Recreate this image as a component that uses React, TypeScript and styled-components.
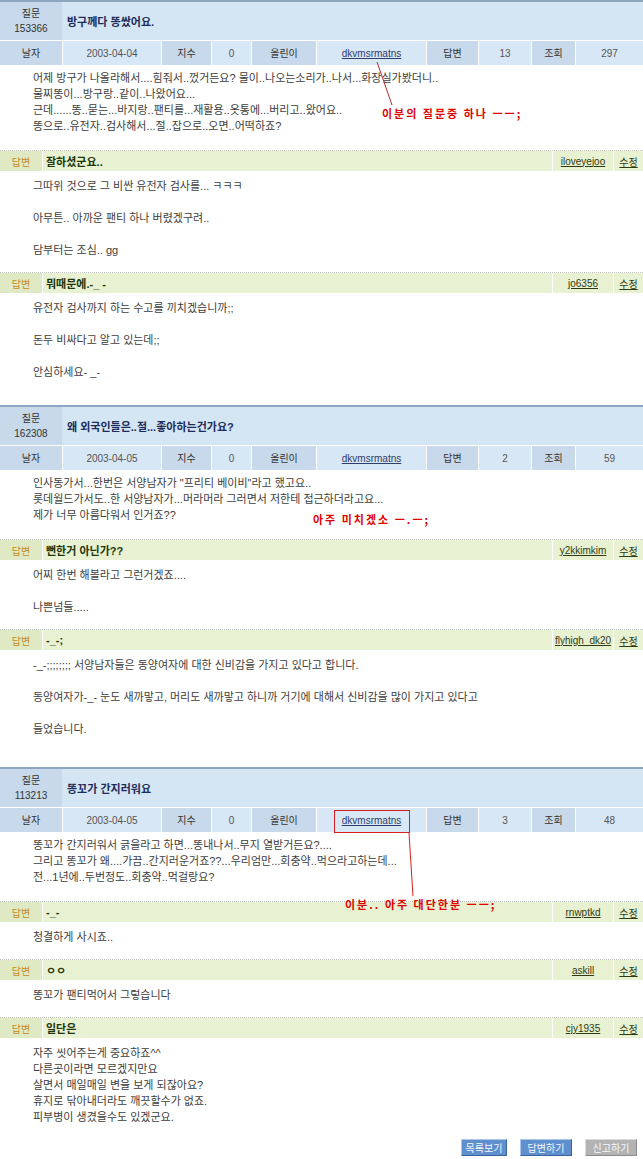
import React from 'react';
import styled, { createGlobalStyle } from 'styled-components';

const GlobalStyle = createGlobalStyle`
  html, body {
    margin: 0;
    padding: 0;
    background: #ffffff;
  }
  body {
    font-family: "Liberation Sans", "Noto Sans CJK KR", sans-serif;
    font-size: 10px;
    color: #444;
  }
`;

const Page = styled.div`
  width: 643px;
`;

const Section = styled.section<{ $gap: number }>`
  position: relative;
  margin-top: ${p => p.$gap}px;
`;

const Head = styled.div`
  border-top: 2px solid #8ea7c1;
  display: flex;
  flex-direction: column;
  gap: 1px;
`;

const TitleRow = styled.div`
  display: grid;
  grid-template-columns: 62px 1fr;
  height: 38px;
`;

const InfoRow = styled.div`
  display: grid;
  grid-template-columns: 62px 98px 49px 39px 64px 109px 51px 52px 43px 1fr;
  column-gap: 1px;
  height: 24px;
`;

const Cell = styled.div<{ $label?: boolean }>`
  display: flex;
  flex-direction: column;
  align-items: center;
  justify-content: center;
  background: ${p => (p.$label ? '#c7d9ea' : '#d8e7f5')};
  color: ${p => (p.$label ? '#333' : '#555')};
  line-height: 15px;
`;

const TitleCell = styled.div`
  display: flex;
  align-items: center;
  padding-left: 5px;
  background: #d4e5f4;
  color: #1d2c5b;
  font-size: 11px;
  font-weight: bold;
`;

const UserLink = styled.a`
  color: #2c3d6e;
  text-decoration: underline;
  cursor: pointer;
`;

const Body = styled.div<{ $top: number; $bottom: number }>`
  padding: ${p => p.$top}px 0 ${p => p.$bottom}px 33px;
  font-size: 11px;
  line-height: 16px;
  color: #3d3d3d;
  white-space: pre;
`;

const Line = styled.div`
  min-height: 16px;
`;

const AnswerHead = styled.div`
  border-top: 1px dotted #c2c2c2;
  display: grid;
  grid-template-columns: 42px 1fr 60px 29px;
  column-gap: 1px;
  height: 20px;
`;

const AnswerCell = styled.div<{ $label?: boolean }>`
  display: flex;
  align-items: center;
  justify-content: center;
  background: ${p => (p.$label ? '#dfe9c4' : '#e8f1d2')};
  color: ${p => (p.$label ? '#c88a1c' : '#333')};
`;

const AnswerTitle = styled.div`
  display: flex;
  align-items: center;
  padding-left: 3px;
  background: #e8f1d2;
  color: #203608;
  font-size: 11px;
  font-weight: bold;
`;

const SmallLink = styled.a`
  color: #2f3a10;
  text-decoration: underline;
  cursor: pointer;
`;

const Note = styled.div<{ $x: number; $y: number }>`
  position: absolute;
  left: ${p => p.$x}px;
  top: ${p => p.$y}px;
  z-index: 3;
  color: #e10000;
  font-family: "Noto Sans CJK KR", sans-serif;
  font-size: 11px;
  font-weight: bold;
  letter-spacing: 2px;
  white-space: pre;
  line-height: 12px;
`;

const Marker = styled.svg`
  position: absolute;
  left: 0;
  top: 0;
  z-index: 2;
  pointer-events: none;
  overflow: visible;
`;

const Buttons = styled.div`
  display: flex;
  justify-content: flex-end;
  gap: 13px;
  padding: 0 6px 4px 0;
`;

const Btn = styled.button<{ $grey?: boolean; $w: number }>`
  width: ${p => p.$w}px;
  height: 17px;
  padding: 0;
  font-family: "Noto Sans CJK KR", sans-serif;
  font-size: 10px;
  line-height: 15px;
  color: #f4f8ff;
  background: ${p => (p.$grey ? '#b3b3b3' : '#5f8fcd')};
  border: 1px solid;
  border-color: ${p =>
    p.$grey ? '#dadada #8c8c8c #8c8c8c #dadada' : '#a9c7ec #36659f #36659f #a9c7ec'};
  cursor: pointer;
`;

type Answer = { title: string; author: string; lines: string[] };

type Question = {
  no: string;
  title: string;
  date: string;
  score: number;
  author: string;
  replies: number;
  views: number;
  lines: string[];
  gap: number;
  answers: Answer[];
  note: { text: string; x: number; y: number };
  mark: React.ReactNode;
};

const questions: Question[] = [
  {
    no: '153366',
    title: '방구께다 똥쌌어요.',
    date: '2003-04-04',
    score: 0,
    author: 'dkvmsrmatns',
    replies: 13,
    views: 297,
    gap: 0,
    lines: [
      '어제 방구가 나올라해서....힘줘서..껐거든요? 물이..나오는소리가..나서...화장실가봤더니..',
      '물찌똥이...방구랑..같이..나왔어요...',
      '근데......똥..묻는...바지랑..팬티를...재활용..옷통에...버리고..왔어요..',
      '똥으로..유전자..검사해서...절..잡으로..오면..어떡하죠?',
    ],
    note: { text: '이분의 질문중 하나 ㅡㅡ;', x: 382, y: 107 },
    mark: <line x1="377" y1="62" x2="392" y2="105" stroke="#b03030" strokeWidth="1" />,
    answers: [
      {
        title: '잘하셨군요..',
        author: 'iloveyejoo',
        lines: ['그따위 것으로 그 비싼 유전자 검사를... ㅋㅋㅋ', '', '아무튼.. 아까운 팬티 하나 버렸겠구려..', '', '담부터는 조심.. gg'],
      },
      {
        title: '뭐때문에.-_ -',
        author: 'jo6356',
        lines: ['유전자 검사까지 하는 수고를 끼치겠습니까;;', '', '돈두 비싸다고 알고 있는데;;', '', '안심하세요- _-'],
      },
    ],
  },
  {
    no: '162308',
    title: '왜 외국인들은..절...좋아하는건가요?',
    date: '2003-04-05',
    score: 0,
    author: 'dkvmsrmatns',
    replies: 2,
    views: 59,
    gap: 11,
    lines: [
      '인사동가서...한번은 서양남자가 "프리티 베이비"라고 했고요..',
      '롯데월드가서도..한 서양남자가...머라머라 그러면서 저한테 접근하더라고요...',
      '제가 너무 아름다워서 인거죠??',
    ],
    note: { text: '아주 미치겠소 ㅡ.ㅡ;', x: 313, y: 108 },
    mark: null,
    answers: [
      {
        title: '뻔한거 아닌가??',
        author: 'y2kkimkim',
        lines: ['어찌 한번 해볼라고 그런거겠죠....', '', '나쁜넘들.....'],
      },
      {
        title: '-_-;',
        author: 'flyhigh_dk20',
        lines: [
          '-_-;;;;;;;; 서양남자들은 동양여자에 대한 신비감을 가지고 있다고 합니다.',
          '',
          '동양여자가-_- 눈도 새까맣고, 머리도 새까맣고 하니까 거기에 대해서 신비감을 많이 가지고 있다고',
          '',
          '들었습니다.',
        ],
      },
    ],
  },
  {
    no: '113213',
    title: '똥꼬가 간지러워요',
    date: '2003-04-05',
    score: 0,
    author: 'dkvmsrmatns',
    replies: 3,
    views: 48,
    gap: 16,
    lines: [
      '똥꼬가 간지러워서 긁을라고 하면...똥내나서..무지 열받거든요?....',
      '그리고 똥꼬가 왜....가끔..간지러운거죠??...우리엄만...회충약..먹으라고하는데...',
      '전...1년에..두번정도..회충약..먹걸랑요?',
    ],
    note: { text: '이분.. 아주 대단한분 ㅡㅡ;', x: 345, y: 131 },
    mark: (
      <>
        <rect x="334.5" y="43.5" width="75" height="22" fill="none" stroke="#d42020" strokeWidth="1" />
        <line x1="409" y1="66" x2="413" y2="129" stroke="#d42020" strokeWidth="1" />
      </>
    ),
    answers: [
      { title: '-_-', author: 'rnwptkd', lines: ['청결하게 사시죠..'] },
      { title: 'ㅇㅇ', author: 'askill', lines: ['똥꼬가 팬티먹어서 그렇습니다'] },
      {
        title: '일단은',
        author: 'cjy1935',
        lines: [
          '자주 씻어주는게 중요하죠^^',
          '다른곳이라면 모르겠지만요',
          '살면서 매일매일 변을 보게 되잖아요?',
          '휴지로 닦아내더라도 깨끗할수가 없죠.',
          '피부병이 생겼을수도 있겠군요.',
        ],
      },
    ],
  },
];

const AnswerBlock: React.FC<{ a: Answer }> = ({ a }) => (
  <div>
    <AnswerHead>
      <AnswerCell $label>답변</AnswerCell>
      <AnswerTitle>{a.title}</AnswerTitle>
      <AnswerCell>
        <SmallLink>{a.author}</SmallLink>
      </AnswerCell>
      <AnswerCell>
        <SmallLink>수정</SmallLink>
      </AnswerCell>
    </AnswerHead>
    <Body $top={7} $bottom={14}>
      {a.lines.map((l, i) => (
        <Line key={i}>{l}</Line>
      ))}
    </Body>
  </div>
);

const QuestionBlock: React.FC<{ q: Question }> = ({ q }) => (
  <Section $gap={q.gap}>
    <Head>
      <TitleRow>
        <Cell $label>
          <span>질문</span>
          <span>{q.no}</span>
        </Cell>
        <TitleCell>{q.title}</TitleCell>
      </TitleRow>
      <InfoRow>
        <Cell $label>날자</Cell>
        <Cell>{q.date}</Cell>
        <Cell $label>지수</Cell>
        <Cell>{q.score}</Cell>
        <Cell $label>올린이</Cell>
        <Cell>
          <UserLink>{q.author}</UserLink>
        </Cell>
        <Cell $label>답변</Cell>
        <Cell>{q.replies}</Cell>
        <Cell $label>조회</Cell>
        <Cell>{q.views}</Cell>
      </InfoRow>
    </Head>
    <Body $top={5} $bottom={16}>
      {q.lines.map((l, i) => (
        <Line key={i}>{l}</Line>
      ))}
    </Body>
    {q.answers.map((a, i) => (
      <AnswerBlock key={i} a={a} />
    ))}
    {q.mark && (
      <Marker width="643" height="200">
        {q.mark}
      </Marker>
    )}
    <Note $x={q.note.x} $y={q.note.y}>
      {q.note.text}
    </Note>
  </Section>
);

export default function App() {
  return (
    <Page>
      <GlobalStyle />
      {questions.map(q => (
        <QuestionBlock key={q.no} q={q} />
      ))}
      <Buttons>
        <Btn $w={46}>목록보기</Btn>
        <Btn $w={52}>답변하기</Btn>
        <Btn $w={52} $grey>
          신고하기
        </Btn>
      </Buttons>
    </Page>
  );
}
